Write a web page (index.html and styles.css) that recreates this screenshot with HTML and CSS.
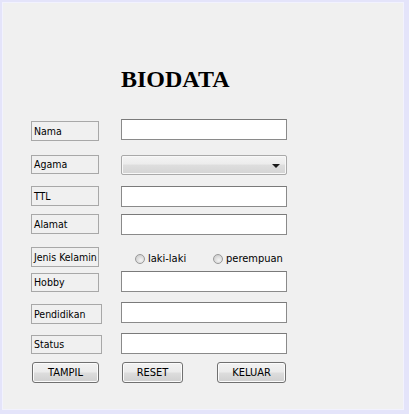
FILE: index.html
```html
<!DOCTYPE html>
<html>
<head>
<meta charset="utf-8">
<title>BIODATA</title>
<link rel="stylesheet" href="styles.css">
</head>
<body>
<div class="frame">
  <div class="panel">
    <h1 class="title">BIODATA</h1>

    <div class="row row-nama">
      <div class="cell"><span class="lbl lbl-low">Nama</span></div>
      <div class="field"></div>
    </div>

    <div class="row row-agama">
      <div class="cell"><span class="lbl lbl-short">Agama</span></div>
      <div class="combo"><span class="arrow"></span></div>
    </div>

    <div class="row row-ttl">
      <div class="cell"><span class="lbl">TTL</span></div>
      <div class="field"></div>
    </div>

    <div class="row row-alamat">
      <div class="cell"><span class="lbl">Alamat</span></div>
      <div class="field"></div>
    </div>

    <div class="row row-jenis">
      <div class="cell"><span class="lbl">Jenis Kelamin</span></div>
      <div class="radios">
        <span class="radio radio-first"><span class="dot"></span>laki-laki</span>
        <span class="radio"><span class="dot"></span>perempuan</span>
      </div>
    </div>

    <div class="row row-hobby">
      <div class="cell"><span class="lbl lbl-low lbl-short">Hobby</span></div>
      <div class="field"></div>
    </div>

    <div class="row row-pend">
      <div class="cell"><span class="lbl lbl-low lbl-wide">Pendidikan</span></div>
      <div class="field"></div>
    </div>

    <div class="row row-status">
      <div class="cell"><span class="lbl lbl-low lbl-wide lbl-short">Status</span></div>
      <div class="field"></div>
    </div>

    <div class="buttons">
      <span class="btn btn-tampil">TAMPIL</span>
      <span class="btn btn-reset">RESET</span>
      <span class="btn btn-keluar">KELUAR</span>
    </div>
  </div>
</div>
</body>
</html>
```

FILE: styles.css
```css
html, body {
  margin: 0;
  padding: 0;
}
body {
  width: 409px;
  height: 414px;
  background: #e4e4fa;
  font-family: "DejaVu Sans Condensed", "Liberation Sans", sans-serif;
  font-size: 10.5px;
  color: #000;
  overflow: hidden;
}
.frame {
  box-sizing: border-box;
  width: 409px;
  height: 414px;
  padding: 3px 6px 5px 3px;
}
.panel {
  box-sizing: border-box;
  height: 406px;
  background: #f0f0f0;
  box-shadow: 0 0 0 1px #f2f2fe;
  padding: 63px 0 0 28px;
}
.title {
  margin: 0 0 0 90px;
  font-family: "Liberation Serif", "Times New Roman", serif;
  font-weight: bold;
  font-size: 24px;
  line-height: 27px;
  height: 27px;
}
.row {
  display: grid;
  grid-template-columns: 90px 166px;
  height: 21px;
}
.row-nama { margin-top: 26px; }
.row-agama { margin-top: 15px; }
.row-ttl { margin-top: 10px; }
.row-alamat { margin-top: 7px; }
.row-jenis { margin-top: 12px; }
.row-hobby { margin-top: 3px; }
.row-pend { margin-top: 10px; }
.row-status { margin-top: 10px; }

.cell {
  position: relative;
}
.lbl {
  box-sizing: border-box;
  display: block;
  width: 68px;
  height: 20px;
  border: 1px solid #a8a8a8;
  background: #f0f0f0;
  padding-left: 2px;
  line-height: 18px;
  white-space: nowrap;
}
.lbl-low { margin-top: 2px; }
.lbl-short { height: 19px; line-height: 17px; }
.lbl-wide { width: 71px; }

.field {
  box-sizing: border-box;
  height: 21px;
  background: #fff;
  border: 1px solid #8a8a8a;
  border-top-color: #7a7a7a;
}
.combo {
  box-sizing: border-box;
  height: 20px;
  border: 1px solid #a9a9a9;
  border-radius: 2px;
  background: linear-gradient(#f4f4f4 0%, #ececec 45%, #dedede 50%, #d4d4d4 100%);
  position: relative;
  box-shadow: inset 0 0 0 1px #f8f8f8;
}
.arrow {
  position: absolute;
  right: 6px;
  top: 8px;
  width: 0;
  height: 0;
  border-left: 4px solid transparent;
  border-right: 4px solid transparent;
  border-top: 4px solid #1a1a1a;
}
.radios {
  display: flex;
  align-items: center;
  padding-left: 14px;
  height: 21px;
  margin-top: 1px;
}
.radio {
  display: flex;
  align-items: center;
  white-space: nowrap;
  font-size: 11px;
}
.radio-first { width: 78px; }
.dot {
  box-sizing: border-box;
  width: 10px;
  height: 10px;
  border-radius: 50%;
  border: 1px solid #999;
  background: radial-gradient(circle at 60% 65%, #f4f4f4 0%, #dadada 55%, #c4c4c4 100%);
  margin-right: 3px;
  margin-top: 1px;
}
.buttons {
  display: flex;
  margin-top: 8px;
  padding-left: 1px;
}
.btn {
  box-sizing: border-box;
  height: 21px;
  border: 1px solid #707070;
  border-radius: 3px;
  background: linear-gradient(#f2f2f2 0%, #ebebeb 48%, #dddddd 52%, #cfcfcf 100%);
  box-shadow: inset 0 0 0 1px #fbfbfb;
  display: flex;
  align-items: center;
  justify-content: center;
  font-size: 11px;
}
.btn-tampil { width: 67px; }
.btn-reset { width: 61px; margin-left: 23px; }
.btn-keluar { width: 69px; margin-left: 34px; }
```
